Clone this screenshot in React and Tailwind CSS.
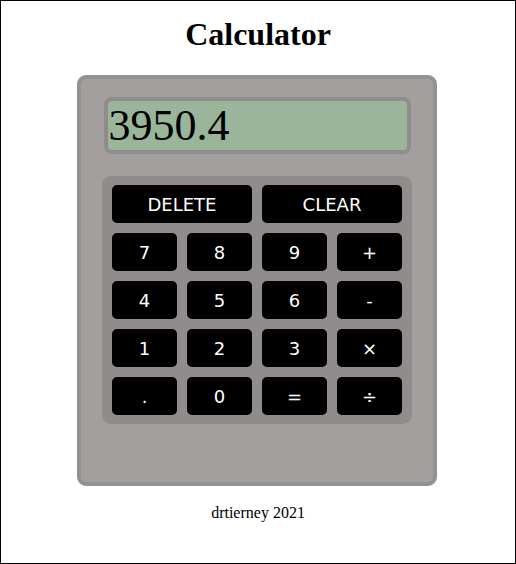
const rows = [
  ['7', '8', '9', '+'],
  ['4', '5', '6', '-'],
  ['1', '2', '3', '×'],
  ['.', '0', '=', '÷'],
];

const Key = ({ label, wide }) => (
  <button
    className={
      wide
        ? 'col-span-2 h-[38px] rounded-[5px] bg-black pt-[2px] text-white text-[18px] leading-none'
        : 'h-[38px] rounded-[5px] bg-black pt-[2px] text-white text-[18px] leading-none'
    }
  >
    {label}
  </button>
);

export default function App() {
  return (
    <div className="w-[516px] h-[564px] border border-black bg-white font-['Liberation_Serif',serif] text-black">
      <h1 className="pt-[15px] text-center text-[32px] font-bold leading-[37px]">Calculator</h1>

      <div className="ml-[76px] mt-[22px] w-[360px] h-[411px] rounded-[9px] border-4 border-[#959190] bg-[#a39f9e] pt-[18px] px-[21px]">
        {/* display */}
        <div className="mx-auto w-[307px] h-[57px] rounded-[8px] border-4 border-[#8f8c8b] bg-[#9bb59a] overflow-hidden">
          <div className="pl-[1px] text-[44px] leading-[49px] whitespace-nowrap">3950.4</div>
        </div>

        {/* keypad */}
        <div className="mt-[22px] w-[310px] rounded-[9px] bg-[#8f8c8b] px-[10px] pt-[9px] pb-[9px] font-['DejaVu_Sans',sans-serif]">
          <div className="grid grid-cols-4 gap-x-[10px] gap-y-[10px]">
            <Key label="DELETE" wide />
            <Key label="CLEAR" wide />
            {rows.flat().map((k) => (
              <Key key={k} label={k} />
            ))}
          </div>
        </div>
      </div>

      <p className="mt-[15px] text-center text-[16px]">drtierney 2021</p>
    </div>
  );
}
